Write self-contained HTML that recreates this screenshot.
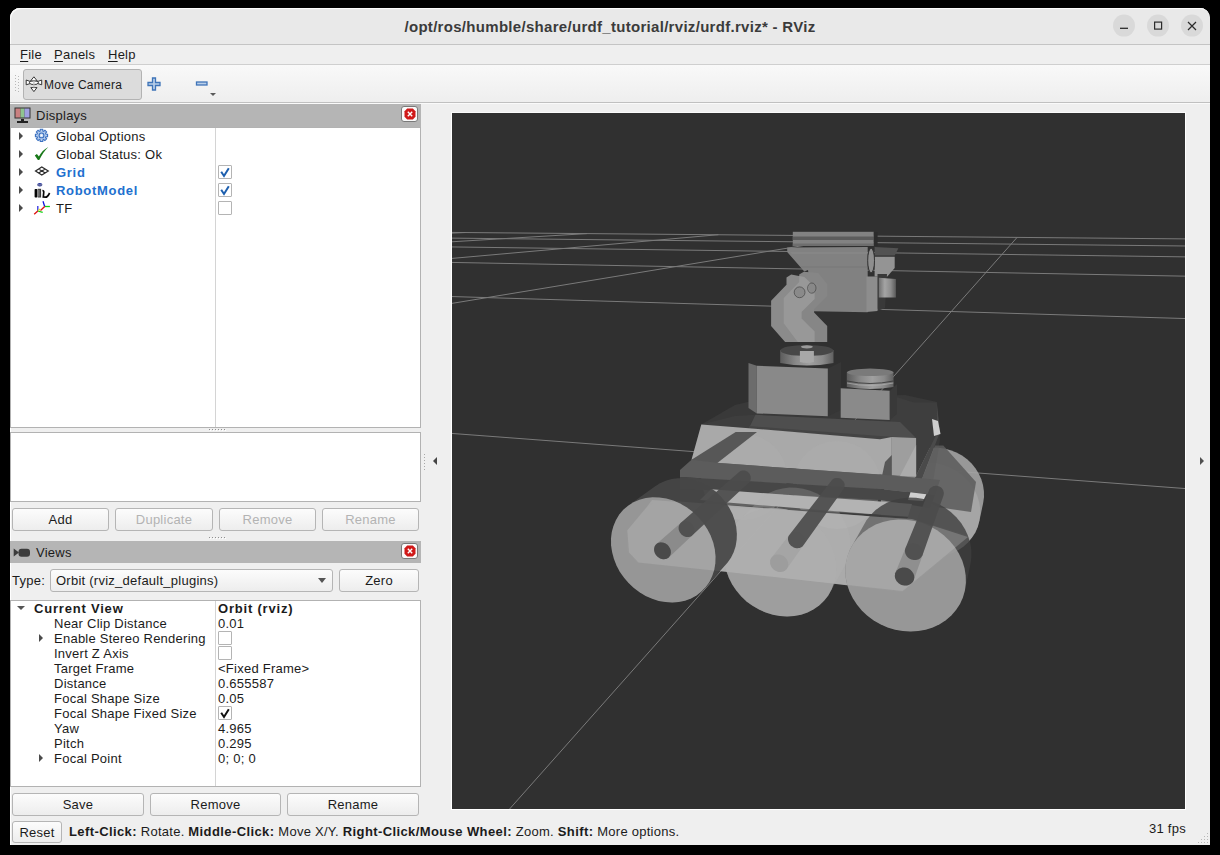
<!DOCTYPE html>
<html><head><meta charset="utf-8">
<style>
*{box-sizing:border-box;margin:0;padding:0}
html,body{width:1220px;height:855px;background:#000;overflow:hidden;font-family:"Liberation Sans",sans-serif;font-size:13px;color:#1b1b1b;position:relative;letter-spacing:0.25px}
.a{position:absolute}
.t{position:absolute;white-space:nowrap;line-height:16px}
b{letter-spacing:0.4px}
.u{text-decoration:underline;text-underline-offset:2px;text-decoration-thickness:1px}
.btn{position:absolute;border:1px solid #b5b5b5;border-radius:3px;background:linear-gradient(#fcfcfc,#ededed);text-align:center;line-height:21px;font-size:13px;color:#1b1b1b}
.dis{color:#b3b3b3}
.hdr{position:absolute;background:#b5b5b5}
.tree{position:absolute;background:#fff;border:1px solid #b2b2b2}
.ar{position:absolute;width:0;height:0;border-top:4px solid transparent;border-bottom:4px solid transparent;border-left:4px solid #4a4a4a}
.ad{position:absolute;width:0;height:0;border-left:4px solid transparent;border-right:4px solid transparent;border-top:4px solid #555}
.cb{position:absolute;width:14px;height:14px;border:1px solid #b4b4b4;background:#fff;border-radius:1px}
.blue{color:#2170cf;font-weight:bold;letter-spacing:0.7px}
.row{position:absolute;white-space:nowrap;line-height:18px;height:18px}
.vr{position:absolute;white-space:nowrap;line-height:15px;height:15px}
.close{position:absolute;width:17px;height:16px;border:1px solid #7a7a7a;border-radius:3px;background:#fafafa}
</style></head><body>
<div class="a" style="left:10px;top:8px;width:1200px;height:837px;background:#efefef;border-top-left-radius:10px;border-top-right-radius:10px;box-shadow:inset 1px 1px 0 #fff"></div>
<!-- title -->
<div class="a" style="left:10px;top:8px;width:1200px;height:37px;background:#e9e9e9;border-top-left-radius:10px;border-top-right-radius:10px;border-bottom:1px solid #c4c4c4;box-shadow:inset 1px 1px 0 #fbfbfb"></div>
<div class="t" style="left:10px;width:1200px;top:18px;text-align:center;font-weight:bold;font-size:15px;letter-spacing:0.3px;line-height:18px;color:#3b3b3b">/opt/ros/humble/share/urdf_tutorial/rviz/urdf.rviz* - RViz</div>
<svg class="a" style="left:0;top:0" width="1220" height="45">
 <circle cx="1124" cy="25.6" r="11" fill="#d9d9d9"/><circle cx="1158" cy="25.6" r="11" fill="#d9d9d9"/><circle cx="1192" cy="25.6" r="11" fill="#d9d9d9"/>
 <line x1="1120" y1="28.3" x2="1128" y2="28.3" stroke="#2b2b2b" stroke-width="1.3"/>
 <rect x="1154.6" y="22.1" width="7" height="7" fill="none" stroke="#2b2b2b" stroke-width="1.2"/>
 <path d="M1188 22 L1196 30 M1196 22 L1188 30" stroke="#2b2b2b" stroke-width="1.2"/>
</svg>
<!-- menubar -->
<div class="a" style="left:10px;top:45px;width:1200px;height:20px;background:#efefef;border-bottom:1px solid #cfcfcf"></div>
<div class="t" style="left:20px;top:47px"><span class="u">F</span>ile</div>
<div class="t" style="left:54px;top:47px"><span class="u">P</span>anels</div>
<div class="t" style="left:108px;top:47px"><span class="u">H</span>elp</div>
<!-- toolbar -->
<div class="a" style="left:10px;top:65px;width:1200px;height:38px;background:linear-gradient(#f9f9f9,#eeeeee);border-bottom:1px solid #c0c0c0;box-shadow:0 1px 0 #fafafa"></div>
<svg class="a" style="left:15px;top:75px" width="6" height="20"><g fill="#b8b8b8"><rect x="0" y="0" width="1" height="1"/><rect x="3" y="1" width="1" height="1"/><rect x="0" y="3" width="1" height="1"/><rect x="3" y="4" width="1" height="1"/><rect x="0" y="6" width="1" height="1"/><rect x="3" y="7" width="1" height="1"/><rect x="0" y="9" width="1" height="1"/><rect x="3" y="10" width="1" height="1"/><rect x="0" y="12" width="1" height="1"/><rect x="3" y="13" width="1" height="1"/><rect x="0" y="15" width="1" height="1"/><rect x="3" y="16" width="1" height="1"/></g></svg>
<div class="a" style="left:23px;top:69px;width:119px;height:31px;background:#dcdcdc;border:1px solid #b3b3b3;border-radius:3px"></div>
<svg class="a" style="left:24px;top:74px" width="20" height="20"><g fill="#fff" stroke="#222" stroke-width="0.9" stroke-linejoin="round"><path d="M2.2 6 L6 7.4 L6 9.6 L2.2 10.8 Z"/><path d="M17.7 6 L13.9 7.4 L13.9 9.6 L17.7 10.8 Z"/><ellipse cx="9.9" cy="8.6" rx="4.4" ry="2"/><path d="M9.9 2.8 L6.6 6.9 L13.2 6.9 Z"/><path d="M9.9 17.6 L6.8 13.6 L13 13.6 Z"/></g><rect x="9.3" y="7" width="1.3" height="6.6" fill="#bbb"/></svg>
<div class="t" style="left:44px;top:77px;font-size:12px">Move Camera</div>
<svg class="a" style="left:147px;top:77px" width="14" height="14"><path d="M5.5 1 H8.5 V5.5 H13 V8.5 H8.5 V13 H5.5 V8.5 H1 V5.5 H5.5 Z" fill="#b9cfe9" stroke="#3f74b8" stroke-width="1.3"/></svg>
<svg class="a" style="left:195px;top:81px" width="14" height="6"><rect x="1.5" y="1" width="10.5" height="3" fill="#b9cfe9" stroke="#3f74b8" stroke-width="1.3"/></svg>
<div class="ad" style="left:210px;top:93px;border-left-width:3px;border-right-width:3px;border-top-width:3px;border-top-color:#5a5a5a"></div>

<!-- Displays panel -->
<div class="hdr" style="left:10px;top:104px;width:411px;height:23px"></div>
<svg class="a" style="left:14px;top:107px" width="17" height="17">
 <rect x="0.5" y="0.5" width="16" height="11" fill="#333" />
 <rect x="1.5" y="1.5" width="5" height="9" fill="#c98080"/><rect x="6.5" y="1.5" width="4" height="9" fill="#8fc48f"/><rect x="10.5" y="1.5" width="5" height="9" fill="#a0a0e0"/>
 <rect x="7" y="12" width="3" height="2" fill="#222"/><rect x="3" y="14" width="11" height="2" fill="#222"/>
</svg>
<div class="t" style="left:36px;top:108px">Displays</div>
<div class="close" style="left:401px;top:106px"></div>
<svg class="a" style="left:404px;top:108px" width="12" height="12"><path d="M3.2 0.5 H8.8 L11.5 3.2 V8.8 L8.8 11.5 H3.2 L0.5 8.8 V3.2 Z" fill="#d01818"/><path d="M3.8 3.8 L8.2 8.2 M8.2 3.8 L3.8 8.2" stroke="#fff" stroke-width="1.4"/></svg>

<div class="tree" style="left:10px;top:127px;width:411px;height:301px"></div>
<div class="a" style="left:215px;top:128px;width:1px;height:299px;background:#d4d4d4"></div>
<div class="ar" style="left:19px;top:132px"></div>
<div class="ar" style="left:19px;top:150px"></div>
<div class="ar" style="left:19px;top:168px"></div>
<div class="ar" style="left:19px;top:186px"></div>
<div class="ar" style="left:19px;top:204px"></div>
<svg class="a" style="left:34px;top:128px" width="16" height="16"><g transform="translate(7.5,7.4)"><path d="M-1.55 -4.33 L-1.36 -4.39 L-1.23 -6.08 L1.23 -6.08 L1.36 -4.39 L1.97 -4.16 L2.15 -4.07 L3.43 -5.17 L5.17 -3.43 L4.07 -2.15 L4.33 -1.55 L4.39 -1.36 L6.08 -1.23 L6.08 1.23 L4.39 1.36 L4.16 1.97 L4.07 2.15 L5.17 3.43 L3.43 5.17 L2.15 4.07 L1.55 4.33 L1.36 4.39 L1.23 6.08 L-1.23 6.08 L-1.36 4.39 L-1.97 4.16 L-2.15 4.07 L-3.43 5.17 L-5.17 3.43 L-4.07 2.15 L-4.33 1.55 L-4.39 1.36 L-6.08 1.23 L-6.08 -1.23 L-4.39 -1.36 L-4.16 -1.97 L-4.07 -2.15 L-5.17 -3.43 L-3.43 -5.17 L-2.15 -4.07 Z" fill="#b3cbec" stroke="#3a70c0" stroke-width="1.1" stroke-linejoin="miter"/><circle r="2.4" fill="#c8daf2" stroke="#3a70c0" stroke-width="1.1"/><circle r="0.9" fill="#fff"/></g></svg>
<svg class="a" style="left:34px;top:146px" width="16" height="16"><path d="M0.8 9.6 L2.9 8.1 L4.9 10.6 C7 6.5 10 3.3 14.3 1 C10.8 4.3 7.8 8.6 5.3 14 L3.9 14 Z" fill="#187818"/></svg>
<svg class="a" style="left:34px;top:164px" width="16" height="14"><path d="M1.5 7 L7.8 3 L14.3 7 L7.8 11 Z M4.6 5 L11.2 9 M11.2 5 L4.6 9" fill="none" stroke="#2a2a2a" stroke-width="1.2"/></svg>
<svg class="a" style="left:34px;top:182px" width="17" height="17"><ellipse cx="5.8" cy="2.8" rx="2.6" ry="1.7" fill="#1a2a9a"/><rect x="3.4" y="2.6" width="4.8" height="0.7" fill="#d8d0a8"/><rect x="0.6" y="7" width="2.8" height="8.5" rx="0.8" fill="#050505"/><rect x="3.8" y="6.8" width="3.3" height="8.7" fill="#3a3a3a"/><rect x="4.4" y="7.6" width="1" height="7" fill="#a0a0a0"/><path d="M8.4 8.6 C9.6 8.6 10 9.4 9.7 10.6 L9.3 15 L11.6 15.2 C13 15.2 14.4 13.4 15.6 11" stroke="#080808" stroke-width="1.7" fill="none"/></svg>
<svg class="a" style="left:33px;top:200px" width="18" height="16"><g stroke-width="1.3" fill="none">
 <line x1="11.7" y1="6.5" x2="16.9" y2="6.5" stroke="#10d010"/><line x1="11.7" y1="6.5" x2="10" y2="1.2" stroke="#1010e0"/><line x1="11.7" y1="6.5" x2="7.5" y2="10.5" stroke="#e01010"/>
 <line x1="4.8" y1="11" x2="4.8" y2="6" stroke="#3030e0"/><line x1="4.8" y1="11" x2="9.7" y2="12.4" stroke="#10d010"/><line x1="4.8" y1="11" x2="1.2" y2="14.3" stroke="#e01010"/><line x1="5" y1="10.8" x2="7.3" y2="9" stroke="#e0e020"/></g></svg>
<div class="row" style="left:56px;top:128px">Global Options</div>
<div class="row" style="left:56px;top:146px">Global Status: Ok</div>
<div class="row blue" style="left:56px;top:164px">Grid</div>
<div class="row blue" style="left:56px;top:182px">RobotModel</div>
<div class="row" style="left:56px;top:200px">TF</div>
<div class="cb" style="left:218px;top:165px"></div>
<div class="cb" style="left:218px;top:183px"></div>
<div class="cb" style="left:218px;top:201px"></div>
<svg class="a" style="left:218px;top:165px" width="14" height="32"><path d="M3.2 6.8 L6 11 L10.8 3.2" stroke="#1d5fae" stroke-width="2" fill="none"/><path d="M3.2 24.8 L6 29 L10.8 21.2" stroke="#1d5fae" stroke-width="2" fill="none"/></svg>
<!-- splitter dots -->
<svg class="a" style="left:209px;top:429px" width="18" height="2"><g fill="#909090"><rect x="0" y="0" width="1" height="1"/><rect x="3" y="0" width="1" height="1"/><rect x="6" y="0" width="1" height="1"/><rect x="9" y="0" width="1" height="1"/><rect x="12" y="0" width="1" height="1"/><rect x="15" y="0" width="1" height="1"/></g><g fill="#fff"><rect x="1" y="1" width="1" height="1"/><rect x="4" y="1" width="1" height="1"/><rect x="7" y="1" width="1" height="1"/><rect x="10" y="1" width="1" height="1"/><rect x="13" y="1" width="1" height="1"/><rect x="16" y="1" width="1" height="1"/></g></svg>
<div class="tree" style="left:10px;top:432px;width:411px;height:70px"></div>
<div class="btn" style="left:12px;top:508px;width:97px;height:23px">Add</div>
<div class="btn dis" style="left:115px;top:508px;width:98px;height:23px">Duplicate</div>
<div class="btn dis" style="left:219px;top:508px;width:97px;height:23px">Remove</div>
<div class="btn dis" style="left:322px;top:508px;width:97px;height:23px">Rename</div>
<svg class="a" style="left:209px;top:537px" width="18" height="2"><g fill="#909090"><rect x="0" y="0" width="1" height="1"/><rect x="3" y="0" width="1" height="1"/><rect x="6" y="0" width="1" height="1"/><rect x="9" y="0" width="1" height="1"/><rect x="12" y="0" width="1" height="1"/><rect x="15" y="0" width="1" height="1"/></g><g fill="#fff"><rect x="1" y="1" width="1" height="1"/><rect x="4" y="1" width="1" height="1"/><rect x="7" y="1" width="1" height="1"/><rect x="10" y="1" width="1" height="1"/><rect x="13" y="1" width="1" height="1"/><rect x="16" y="1" width="1" height="1"/></g></svg>
<!-- Views -->
<div class="hdr" style="left:10px;top:541px;width:411px;height:22px"></div>
<svg class="a" style="left:13px;top:548px" width="18" height="10"><path d="M0.7 0.5 L6 4.5 L0.7 8.5 Z" fill="#3c3c3c"/><rect x="5.5" y="0.8" width="11.5" height="8" rx="3" fill="#3c3c3c"/></svg>
<div class="t" style="left:36px;top:545px">Views</div>
<div class="close" style="left:401px;top:543px"></div>
<svg class="a" style="left:404px;top:545px" width="12" height="12"><path d="M3.2 0.5 H8.8 L11.5 3.2 V8.8 L8.8 11.5 H3.2 L0.5 8.8 V3.2 Z" fill="#d01818"/><path d="M3.8 3.8 L8.2 8.2 M8.2 3.8 L3.8 8.2" stroke="#fff" stroke-width="1.4"/></svg>
<div class="t" style="left:12px;top:573px">Type:</div>
<div class="btn" style="left:50px;top:569px;width:283px;height:23px;text-align:left;padding-left:5px">Orbit (rviz_default_plugins)</div>
<div class="ad" style="left:318px;top:578px;border-top-width:5px;border-left-width:4px;border-right-width:4px"></div>
<div class="btn" style="left:339px;top:569px;width:80px;height:23px">Zero</div>
<div class="tree" style="left:10px;top:600px;width:411px;height:187px"></div>
<div class="a" style="left:215px;top:601px;width:1px;height:185px;background:#d4d4d4"></div>
<div class="ad" style="left:17px;top:606px"></div>
<div class="ar" style="left:39px;top:634px"></div>
<div class="ar" style="left:39px;top:754px"></div>
<div class="vr" style="left:34px;top:601px;font-weight:bold;letter-spacing:0.8px">Current View</div>
<div class="vr" style="left:218px;top:601px;font-weight:bold;letter-spacing:0.8px">Orbit (rviz)</div>
<div class="vr" style="left:54px;top:616px">Near Clip Distance</div>
<div class="vr" style="left:54px;top:631px">Enable Stereo Rendering</div>
<div class="vr" style="left:54px;top:646px">Invert Z Axis</div>
<div class="vr" style="left:54px;top:661px">Target Frame</div>
<div class="vr" style="left:54px;top:676px">Distance</div>
<div class="vr" style="left:54px;top:691px">Focal Shape Size</div>
<div class="vr" style="left:54px;top:706px">Focal Shape Fixed Size</div>
<div class="vr" style="left:54px;top:721px">Yaw</div>
<div class="vr" style="left:54px;top:736px">Pitch</div>
<div class="vr" style="left:54px;top:751px">Focal Point</div>
<div class="vr" style="left:218px;top:616px">0.01</div>
<div class="cb" style="left:218px;top:631px"></div>
<div class="cb" style="left:218px;top:646px"></div>
<div class="vr" style="left:218px;top:661px">&lt;Fixed Frame&gt;</div>
<div class="vr" style="left:218px;top:676px">0.655587</div>
<div class="vr" style="left:218px;top:691px">0.05</div>
<div class="cb" style="left:218px;top:706px"></div>
<svg class="a" style="left:218px;top:706px" width="14" height="14"><path d="M3.2 6.8 L6 11 L10.8 3.2" stroke="#111" stroke-width="2" fill="none"/></svg>
<div class="vr" style="left:218px;top:721px">4.965</div>
<div class="vr" style="left:218px;top:736px">0.295</div>
<div class="vr" style="left:218px;top:751px">0; 0; 0</div>
<div class="btn" style="left:12px;top:793px;width:132px;height:23px">Save</div>
<div class="btn" style="left:150px;top:793px;width:131px;height:23px">Remove</div>
<div class="btn" style="left:287px;top:793px;width:132px;height:23px">Rename</div>
<!-- status -->
<div class="btn" style="left:12px;top:821px;width:50px;height:22px;line-height:22px">Reset</div>
<div class="t" style="left:69px;top:824px"><b>Left-Click:</b> Rotate. <b>Middle-Click:</b> Move X/Y. <b>Right-Click/Mouse Wheel:</b> Zoom. <b>Shift:</b> More options.</div>
<div class="t" style="left:1149px;top:821px">31 fps</div>
<svg class="a" style="left:1198px;top:832px" width="12" height="12"><g fill="#b8b8b8"><rect x="9" y="1" width="1" height="1"/><rect x="6" y="4" width="1" height="1"/><rect x="9" y="4" width="1" height="1"/><rect x="3" y="7" width="1" height="1"/><rect x="6" y="7" width="1" height="1"/><rect x="9" y="7" width="1" height="1"/><rect x="0" y="10" width="1" height="1"/><rect x="3" y="10" width="1" height="1"/><rect x="6" y="10" width="1" height="1"/><rect x="9" y="10" width="1" height="1"/></g></svg>
<!-- side arrows --><svg class="a" style="left:424px;top:454px" width="2" height="17"><g fill="#a8a8a8"><rect x="0" y="0" width="1" height="1"/><rect x="0" y="3" width="1" height="1"/><rect x="0" y="6" width="1" height="1"/><rect x="0" y="9" width="1" height="1"/><rect x="0" y="12" width="1" height="1"/><rect x="0" y="15" width="1" height="1"/></g></svg>
<div class="a" style="left:433px;top:457px;width:0;height:0;border-top:4px solid transparent;border-bottom:4px solid transparent;border-right:4px solid #444"></div>
<div class="a" style="left:1200px;top:457px;width:0;height:0;border-top:4px solid transparent;border-bottom:4px solid transparent;border-left:4px solid #505050"></div>
<!-- viewport -->
<div class="a" style="left:451px;top:112px;width:735px;height:698px;border:1px solid #fff;border-top-color:#fafafa"></div>
<div class="a" style="left:452px;top:113px;width:733px;height:696px;background:#303030;overflow:hidden">
<svg width="733" height="696" viewBox="452 113 733 696" style="position:absolute;left:0;top:0"><g stroke="#7a7a7a" stroke-width="1" fill="none"><line x1="450.0" y1="233.2" x2="465.5" y2="232.5"/><line x1="450.0" y1="241.9" x2="586.9" y2="233.6"/><line x1="450.0" y1="258.6" x2="718.4" y2="234.7"/><line x1="450.0" y1="303.7" x2="861.3" y2="236.0"/><line x1="507.8" y1="811.0" x2="1017.1" y2="237.4"/><line x1="450.0" y1="433.3" x2="1187.0" y2="488.7"/><line x1="450.0" y1="296.5" x2="1187.0" y2="318.6"/><line x1="450.0" y1="262.4" x2="1187.0" y2="276.2"/><line x1="450.0" y1="246.9" x2="1187.0" y2="256.9"/><line x1="450.0" y1="238.1" x2="1187.0" y2="246.0"/><line x1="450.0" y1="232.4" x2="1187.0" y2="238.9"/></g><polygon points="880.5,506.0 881.0,500.0 882.4,494.1 884.6,488.5 887.6,483.2 896.5,467.5 900.0,462.9 904.2,458.7 908.9,455.2 914.2,452.2 919.8,450.0 925.8,448.5 931.9,447.7 938.2,447.7 944.4,448.6 950.5,450.2 956.4,452.5 962.0,455.6 967.1,459.3 971.6,463.6 975.6,468.4 978.8,473.7 981.3,479.2 983.0,485.0 983.9,490.9 984.0,496.9 983.2,502.7 979.4,520.8 977.8,526.7 975.3,532.4 972.0,537.6 968.1,542.3 963.5,546.4 958.3,549.9 952.7,552.7 946.8,554.8 940.6,556.1 934.2,556.6 927.8,556.3 921.4,555.3 915.2,553.5 909.2,551.1 903.6,547.9 898.5,544.1 893.8,539.7 889.8,534.8 886.4,529.6 883.8,524.0 881.9,518.1 880.8,512.1" fill="#a4a4a4" fill-opacity="0.9"/><polygon points="980.2,514.7 980.2,508.4 979.2,502.2 977.4,496.1 974.7,490.2 971.3,484.6 967.1,479.5 962.3,475.0 956.8,471.0 951.0,467.7 944.7,465.2 938.2,463.5 931.6,462.6 925.0,462.5 918.5,463.3 912.2,464.9 906.2,467.2 900.7,470.3 895.7,474.0 891.3,478.4 887.6,483.2 884.6,488.5 882.4,494.1 881.0,500.0 880.5,506.0 880.8,512.1 881.9,518.1 883.8,524.0 886.4,529.6 889.8,534.8 893.8,539.7 898.5,544.1 903.6,547.9 909.2,551.1 915.2,553.5 921.4,555.3 927.8,556.3 934.2,556.6 940.6,556.1 946.8,554.8 952.7,552.7 958.3,549.9 963.5,546.4 968.1,542.3 972.0,537.6 975.3,532.4 977.8,526.7 979.4,520.8" fill="#b2b2b2" fill-opacity="0.5" /><!-- translucent dark top plate over bg -->
<path d="M691.5 460 L701.3 424.6 L735 405 L756 400 L905 395 L937 402 L940 440 L930 500 L900 560 L680 560 L680 477 Z" fill="#4a4a4a" fill-opacity="0.35"/>
<!-- far right wheel dark end face -->
<path d="M935 445.5 L943.3 445.5 L976 482 L971 512 L938.6 507.3 L915 497 Z" fill="#5a5a5a" fill-opacity="0.85"/>
<!-- tall dark block right -->
<path d="M890 395 L914 402.5 L936.7 402.5 L937 433 L916 476 L891.8 476 Z" fill="#3e3e3e"/>
<path d="M936.7 402.5 L940 432 L915 497 L905 497 L916 476 L937 433 Z" fill="#4a4a4a"/>
<path d="M932 419 L938 421 L940.5 434 L934 436 Z" fill="#cfcfcf"/>
<!-- dark rim band -->
<path d="M701.3 424.6 L748.9 428.2 L755.4 414.8 L735 416 Z" fill="#3e3e3e"/><path d="M755.4 414.8 L900 422 L916 438 L880 439.3 L748.9 428.2 Z" fill="#4e4e4e"/>
<path d="M748.9 426 L880 436 L916 438 L880 439.3 L748.9 427.9 Z" fill="#444"/>
<!-- upper light plate -->
<path d="M701.3 424.6 L748.9 428.2 L880 439.3 L891.8 437.1 L891.8 475.5 L880 474.6 L719.3 463.1 L691.5 459.8 Z" fill="#a9a9a9"/>
<ellipse cx="744" cy="477" rx="43" ry="43" fill="#b0b0b0" fill-opacity="0.35"/>
<ellipse cx="837" cy="485" rx="44" ry="44" fill="#b0b0b0" fill-opacity="0.35"/>
<!-- right small box face -->
<path d="M891.8 437.1 L916.1 438 L916.1 476.4 L891.8 475.5 Z" fill="#9e9e9e"/>
<path d="M903 470 L916.1 445 L916.1 476.4 L900 476 Z" fill="#acacac"/>
<path d="M885 462 L891.8 455 L891.8 475.5 L887 485 L882 476 Z" fill="#575757"/>
<!-- diagonal dark bar -->
<path d="M691.5 459.8 L735.7 432 L757 432 L701.3 475.4 Z" fill="#575757"/>
<!-- middle band medium -->
<path d="M719.3 463.1 L891.8 475.5 L940 480 L935 495 L880 489 L680 477 L680 470 L691.5 459.8 Z" fill="#5c5c5c"/>
<path d="M680 477 L880 489 L935 495 L930 508 L880 500 L680 488.5 Z" fill="#474747"/>
<!-- lower light strip -->
<path d="M711 489.3 L880 501.6 L912 504 L908 516.5 L880 514.8 L727.5 502.5 L700 500 Z" fill="#b3b3b3"/>
<path d="M650 500 L880 515 L908 517 L907 519 L880 517 L650 502 Z" fill="#3c3c3c"/>
<path d="M910.5 492.3 L926.4 494.2 L923 501 L908 500 Z" fill="#d0d0d0"/>
<!-- lower chassis near face -->
<path d="M627.5 531.7 L643.4 510.2 L660 500 L880 517 L912 519 L970 536 L902.3 591.8 L780 577.5 L637.8 562.6 L627.5 550.4 Z" fill="#b4b4b4" fill-opacity="0.85"/>
<defs>
<linearGradient id="cylg" x1="0" x2="1" y1="0" y2="0"><stop offset="0" stop-color="#5c5c5c"/><stop offset="0.3" stop-color="#8a8a8a"/><stop offset="0.55" stop-color="#a0a0a0"/><stop offset="0.8" stop-color="#8a8a8a"/><stop offset="1" stop-color="#606060"/></linearGradient>
<linearGradient id="lensg" x1="0" x2="1" y1="0" y2="0"><stop offset="0" stop-color="#707070"/><stop offset="0.35" stop-color="#a4a4a4"/><stop offset="0.7" stop-color="#8c8c8c"/><stop offset="1" stop-color="#5a5a5a"/></linearGradient>
</defs>
<!-- left box -->
<path d="M748.5 363 L756.8 365.7 L756.8 413.4 L748.5 408 Z" fill="#6c6c6c"/>
<path d="M756.8 365.7 L827.9 368.5 L827.9 416.2 L756.8 413.4 Z" fill="#898989"/>
<path d="M827.9 368.5 L841 362 L841 410 L827.9 416.2 Z" fill="#363636"/>
<!-- right box -->
<path d="M840.7 388.2 L889.8 390.7 L889.8 420.1 L840.7 417.7 Z" fill="#8a8a8a"/>
<path d="M889.8 390.7 L897 384 L897 414 L889.8 420.1 Z" fill="#393939"/>
<path d="M846.8 372.3 L893.5 372.3 L893.5 387 Q870 391 846.8 387 Z" fill="url(#cylg)"/>
<ellipse cx="870.2" cy="372.3" rx="23.3" ry="3.7" fill="#7a7a7a"/>
<path d="M847 381 Q870 386 893.4 381" stroke="#3c3c3c" stroke-width="0.9" fill="none"/>
<path d="M847 383 Q870 388 893.4 383" stroke="#b0b0b0" stroke-width="0.7" fill="none"/>
<!-- turntable -->
<path d="M780.2 350 L833.5 350 L833.5 363 Q806.8 368 780.2 363 Z" fill="url(#cylg)"/>
<ellipse cx="806.8" cy="350.5" rx="26.6" ry="5.5" fill="#474747"/>
<path d="M799.9 351 L813.9 351 L813.9 362 Q806.9 364 799.9 362 Z" fill="#a8a8a8"/>
<ellipse cx="806.9" cy="346.8" rx="6" ry="1.6" fill="#9a9a9a"/>
<!-- head -->
<path d="M787.2 247.5 L867.7 247 L867.7 312.2 L813.7 311.3 L808 270 L804.3 271.6 L787.2 252 Z" fill="#818181"/>
<path d="M790 252 L867.7 252 L867.7 254 L792 254 Z" fill="#8a8a8a" fill-opacity="0.6"/>
<path d="M800 266 L867.7 266 L867.7 268 L802 268 Z" fill="#777" fill-opacity="0.5"/>
<rect x="792.8" y="231.8" width="81" height="14.2" fill="#828282"/>
<rect x="792.8" y="236.5" width="81" height="3.5" fill="#5c5c5c"/>
<rect x="792.8" y="243.5" width="81" height="2.5" fill="#6e6e6e"/>
<rect x="873.8" y="232" width="3.8" height="14" fill="#2c2c2c"/>
<path d="M874.6 247 L898.4 248.2 L894.7 255.6 L874.6 255.6 Z" fill="#525252"/>
<path d="M874.6 256.8 L894.7 256.8 L894.7 267.9 L887.3 276.5 L874.6 276.5 Z" fill="#949494"/>
<path d="M877.5 274 L887 274 L885 308 L877.5 310.9 Z" fill="#393939"/>
<path d="M866.5 276.5 L877.5 276.5 L877.5 310.9 L866.5 312.1 Z" fill="#8d8d8d"/>
<path d="M878.8 277.7 L895.9 279 L895.9 297.4 L878.8 297.4 Z" fill="url(#lensg)"/>
<ellipse cx="871.1" cy="260.5" rx="3.4" ry="12.3" fill="#8e8e8e" stroke="#2e2e2e" stroke-width="0.9"/>
<!-- arm bracket -->
<defs><clipPath id="plB"><path d="M783.7 298 L799.2 282 L799.2 274.6 L803.8 271.7 L818.3 273.1 L827.2 283.9 L827.2 296.1 L814.1 309.2 L814.1 312.5 L827.2 326 L827.2 341.9 L797.8 341.9 L783.7 323.2 Z"/></clipPath></defs>
<path d="M783.7 298 L799.2 282 L799.2 274.6 L803.8 271.7 L818.3 273.1 L827.2 283.9 L827.2 296.1 L814.1 309.2 L814.1 312.5 L827.2 326 L827.2 341.9 L797.8 341.9 L783.7 323.2 Z" fill="#868686"/>
<path d="M771.1 300.8 L786.5 284.8 L786.5 277.4 L791.2 274.6 L804.3 276.9 L814.6 286.7 L814.6 298.9 L801.5 312 L801.5 318.5 L814.6 331.6 L814.6 341.9 L785.1 341.9 L771.1 326 Z" fill="#8b8b8b"/>
<path d="M771.1 300.8 L786.5 284.8 L786.5 277.4 L791.2 274.6 L804.3 276.9 L814.6 286.7 L814.6 298.9 L801.5 312 L801.5 318.5 L814.6 331.6 L814.6 341.9 L785.1 341.9 L771.1 326 Z" fill="#989898" clip-path="url(#plB)"/>
<circle cx="813.7" cy="287.7" r="5.2" fill="#888"/>
<circle cx="799.6" cy="292.3" r="5.4" fill="#8a8a8a" stroke="#444" stroke-width="0.7"/>
<ellipse cx="811.8" cy="288.1" rx="4.2" ry="5.1" fill="none" stroke="#444" stroke-width="0.7"/>
<polygon points="845.3,570.2 845.9,563.1 847.4,556.2 850.0,549.5 853.5,543.3 866.5,520.3 870.7,514.9 875.6,510.1 881.2,506.0 887.4,502.6 894.1,500.1 901.2,498.4 908.6,497.6 916.1,497.8 923.6,498.9 930.9,500.9 938.0,503.8 944.7,507.5 950.8,512.0 956.3,517.2 961.1,523.0 965.0,529.3 968.1,535.9 970.2,542.8 971.3,549.8 971.4,556.8 970.5,563.7 964.9,590.4 962.9,597.4 960.0,604.0 956.0,610.1 951.3,615.5 945.8,620.3 939.6,624.3 932.8,627.5 925.6,629.7 918.2,631.1 910.5,631.5 902.8,631.1 895.1,629.7 887.6,627.4 880.4,624.3 873.7,620.4 867.4,615.7 861.8,610.4 856.9,604.6 852.8,598.3 849.5,591.6 847.1,584.6 845.7,577.4" fill="#3e3e3e" fill-opacity="0.8"/><polygon points="965.9,583.1 965.7,575.6 964.5,568.1 962.3,560.8 959.0,553.7 954.8,547.0 949.6,540.7 943.7,535.2 937.1,530.3 929.9,526.3 922.3,523.1 914.4,520.9 906.4,519.7 898.3,519.5 890.5,520.2 882.9,522.0 875.7,524.6 869.1,528.2 863.1,532.5 857.9,537.6 853.5,543.3 850.0,549.5 847.4,556.2 845.9,563.1 845.3,570.2 845.7,577.4 847.1,584.6 849.5,591.6 852.8,598.3 856.9,604.6 861.8,610.4 867.4,615.7 873.7,620.4 880.4,624.3 887.6,627.4 895.1,629.7 902.8,631.1 910.5,631.5 918.2,631.1 925.6,629.7 932.8,627.5 939.6,624.3 945.8,620.3 951.3,615.5 956.0,610.1 960.0,604.0 962.9,597.4 964.9,590.4" fill="#a2a2a2" fill-opacity="0.9" /><polygon points="724.1,557.4 724.3,550.4 725.4,543.7 727.5,537.3 730.5,531.2 734.3,525.7 738.9,520.8 759.2,499.9 764.2,495.9 769.9,492.6 776.0,490.1 782.5,488.4 789.4,487.6 796.3,487.8 803.3,488.8 810.3,490.7 817.0,493.5 823.3,497.1 829.2,501.5 834.6,506.5 839.2,512.1 843.1,518.2 846.2,524.6 848.5,531.3 849.8,538.1 850.2,544.8 849.6,551.5 848.2,557.9 845.8,564.0 831.6,589.6 828.3,595.5 824.1,600.8 819.2,605.4 813.7,609.3 807.6,612.4 801.1,614.7 794.2,616.0 787.1,616.5 779.9,616.1 772.8,614.8 765.7,612.6 759.0,609.6 752.5,605.8 746.5,601.4 741.1,596.3 736.3,590.6 732.2,584.5 728.9,578.0 726.4,571.2 724.8,564.3" fill="#b0b0b0" fill-opacity="0.25"/><polygon points="836.1,569.3 835.7,562.1 834.2,554.8 831.8,547.7 828.5,540.9 824.3,534.4 819.2,528.4 813.5,523.0 807.2,518.3 800.4,514.4 793.2,511.4 785.8,509.3 778.3,508.2 770.9,508.0 763.7,508.8 756.7,510.5 750.2,513.1 744.2,516.5 738.9,520.8 734.3,525.7 730.5,531.2 727.5,537.3 725.4,543.7 724.3,550.4 724.1,557.4 724.8,564.3 726.4,571.2 728.9,578.0 732.2,584.5 736.3,590.6 741.1,596.3 746.5,601.4 752.5,605.8 759.0,609.6 765.7,612.6 772.8,614.8 779.9,616.1 787.1,616.5 794.2,616.0 801.1,614.7 807.6,612.4 813.7,609.3 819.2,605.4 824.1,600.8 828.3,595.5 831.6,589.6 834.1,583.1 835.6,576.3" fill="#a6a6a6" fill-opacity="0.9" /><polygon points="611.0,538.6 611.8,532.1 613.5,525.9 616.0,520.0 619.3,514.6 623.3,509.8 628.1,505.7 654.9,486.4 660.1,483.2 665.7,480.7 671.7,479.1 678.0,478.3 684.5,478.4 691.1,479.4 697.6,481.3 704.0,484.0 710.0,487.4 715.7,491.6 720.9,496.5 725.4,501.9 729.3,507.8 732.5,514.0 734.8,520.5 736.3,527.1 736.9,533.7 736.7,540.1 735.6,546.4 733.7,552.3 731.0,557.7 727.5,562.7 705.8,587.1 701.4,591.6 696.5,595.4 691.0,598.4 685.0,600.7 678.7,602.0 672.2,602.5 665.5,602.1 658.8,600.9 652.2,598.8 645.7,595.9 639.6,592.3 633.9,588.0 628.6,583.0 623.9,577.6 619.8,571.7 616.5,565.4 613.9,558.8 612.1,552.1 611.1,545.3" fill="#474747" fill-opacity="0.92"/><polygon points="715.5,556.4 714.8,549.5 713.2,542.5 710.6,535.6 707.2,528.9 703.0,522.7 698.1,516.9 692.6,511.7 686.5,507.2 680.1,503.5 673.3,500.6 666.4,498.6 659.4,497.5 652.5,497.3 645.8,498.1 639.4,499.8 633.5,502.3 628.1,505.7 623.3,509.8 619.3,514.6 616.0,520.0 613.5,525.9 611.8,532.1 611.0,538.6 611.1,545.3 612.1,552.1 613.9,558.8 616.5,565.4 619.8,571.7 623.9,577.6 628.6,583.0 633.9,588.0 639.6,592.3 645.7,595.9 652.2,598.8 658.8,600.9 665.5,602.1 672.2,602.5 678.7,602.0 685.0,600.7 691.0,598.4 696.5,595.4 701.4,591.6 705.8,587.1 709.4,581.9 712.2,576.1 714.2,569.9 715.3,563.3" fill="#a0a0a0" fill-opacity="0.9" /><defs><clipPath id="lwf"><polygon points="715.5,556.4 714.8,549.5 713.2,542.5 710.6,535.6 707.2,528.9 703.0,522.7 698.1,516.9 692.6,511.7 686.5,507.2 680.1,503.5 673.3,500.6 666.4,498.6 659.4,497.5 652.5,497.3 645.8,498.1 639.4,499.8 633.5,502.3 628.1,505.7 623.3,509.8 619.3,514.6 616.0,520.0 613.5,525.9 611.8,532.1 611.0,538.6 611.1,545.3 612.1,552.1 613.9,558.8 616.5,565.4 619.8,571.7 623.9,577.6 628.6,583.0 633.9,588.0 639.6,592.3 645.7,595.9 652.2,598.8 658.8,600.9 665.5,602.1 672.2,602.5 678.7,602.0 685.0,600.7 691.0,598.4 696.5,595.4 701.4,591.6 705.8,587.1 709.4,581.9 712.2,576.1 714.2,569.9 715.3,563.3"/></clipPath><clipPath id="nolw"><path d="M452 113 H1185 V809 H452 Z M611.0,538.6 L611.8,532.1 L613.5,525.9 L616.0,520.0 L619.3,514.6 L623.3,509.8 L628.1,505.7 L654.9,486.4 L660.1,483.2 L665.7,480.7 L671.7,479.1 L678.0,478.3 L684.5,478.4 L691.1,479.4 L697.6,481.3 L704.0,484.0 L710.0,487.4 L715.7,491.6 L720.9,496.5 L725.4,501.9 L729.3,507.8 L732.5,514.0 L734.8,520.5 L736.3,527.1 L736.9,533.7 L736.7,540.1 L735.6,546.4 L733.7,552.3 L731.0,557.7 L727.5,562.7 L705.8,587.1 L701.4,591.6 L696.5,595.4 L691.0,598.4 L685.0,600.7 L678.7,602.0 L672.2,602.5 L665.5,602.1 L658.8,600.9 L652.2,598.8 L645.7,595.9 L639.6,592.3 L633.9,588.0 L628.6,583.0 L623.9,577.6 L619.8,571.7 L616.5,565.4 L613.9,558.8 L612.1,552.1 L611.1,545.3 Z" clip-rule="evenodd"/></clipPath></defs><path d="M627.3 530.3 L646 508 L652 500 L880 517 L912 519 L968 537 L902.7 591 L638.4 562.5 L629 552.5 Z" fill="#c4c4c4" fill-opacity="0.28" clip-path="url(#nolw)"/><path d="M627.3 530.3 L646 508 L652 500 L880 517 L912 519 L968 537 L902.7 591 L638.4 562.5 L629 552.5 Z" fill="#c4c4c4" fill-opacity="0.28" clip-path="url(#lwf)"/><polygon points="654.1,549.9 654.1,548.8 654.3,547.8 654.5,546.8 655.0,545.8 655.5,545.0 656.2,544.2 680.6,522.9 681.4,522.3 682.2,521.8 683.1,521.5 684.1,521.2 685.1,521.1 686.1,521.2 687.2,521.3 688.2,521.6 689.2,522.1 690.2,522.6 691.1,523.3 691.9,524.0 692.6,524.9 693.2,525.8 693.7,526.8 694.1,527.8 694.4,528.9 694.5,529.9 694.5,530.9 694.3,531.9 694.0,532.9 693.6,533.8 693.1,534.6 692.4,535.3 668.8,557.4 668.0,558.0 667.1,558.5 666.1,558.9 665.1,559.1 664.1,559.2 663.0,559.2 661.9,559.0 660.8,558.7 659.7,558.2 658.7,557.6 657.8,556.9 656.9,556.1 656.1,555.2 655.5,554.2 654.9,553.2 654.5,552.1 654.2,551.0" fill="#858585" fill-opacity="0.8"/><polygon points="670.9,551.7 670.8,550.6 670.5,549.5 670.1,548.4 669.5,547.4 668.9,546.4 668.1,545.5 667.2,544.6 666.3,543.9 665.3,543.3 664.2,542.9 663.1,542.5 662.0,542.4 660.9,542.3 659.8,542.4 658.8,542.7 657.9,543.1 657.0,543.6 656.2,544.2 655.5,545.0 655.0,545.8 654.5,546.8 654.3,547.8 654.1,548.8 654.1,549.9 654.2,551.0 654.5,552.1 654.9,553.2 655.5,554.2 656.1,555.2 656.9,556.1 657.8,556.9 658.7,557.6 659.7,558.2 660.8,558.7 661.9,559.0 663.0,559.2 664.1,559.2 665.1,559.1 666.1,558.9 667.1,558.5 668.0,558.0 668.8,557.4 669.4,556.6 670.0,555.8 670.4,554.9 670.7,553.9 670.9,552.8" fill="#4a4a4a"/><polygon points="770.2,562.3 770.2,561.1 770.4,560.0 770.8,559.0 771.3,558.0 771.9,557.2 789.7,534.4 790.4,533.6 791.2,533.0 792.1,532.5 793.1,532.1 794.2,531.9 795.3,531.7 796.4,531.8 797.5,532.0 798.6,532.3 799.6,532.7 800.6,533.3 801.6,534.0 802.4,534.8 803.1,535.7 803.8,536.6 804.3,537.6 804.6,538.7 804.8,539.8 804.9,540.8 804.9,541.9 804.6,542.9 804.3,543.9 803.8,544.8 787.0,568.4 786.4,569.3 785.6,570.0 784.7,570.7 783.8,571.2 782.7,571.6 781.6,571.8 780.5,571.9 779.3,571.9 778.1,571.7 777.0,571.3 775.8,570.8 774.8,570.2 773.8,569.5 772.9,568.6 772.1,567.7 771.4,566.7 770.9,565.6 770.5,564.5 770.3,563.4" fill="#a2a2a2" fill-opacity="0.8"/><polygon points="788.2,564.2 788.1,563.0 787.9,561.9 787.5,560.8 786.9,559.7 786.3,558.7 785.5,557.7 784.6,556.9 783.6,556.1 782.5,555.5 781.4,555.0 780.2,554.7 779.0,554.5 777.8,554.5 776.7,554.6 775.6,554.8 774.5,555.2 773.6,555.7 772.7,556.4 771.9,557.2 771.3,558.0 770.8,559.0 770.4,560.0 770.2,561.1 770.2,562.3 770.3,563.4 770.5,564.5 770.9,565.6 771.4,566.7 772.1,567.7 772.9,568.6 773.8,569.5 774.8,570.2 775.8,570.8 777.0,571.3 778.1,571.7 779.3,571.9 780.5,571.9 781.6,571.8 782.7,571.6 783.8,571.2 784.7,570.7 785.6,570.0 786.4,569.3 787.0,568.4 787.5,567.4 787.9,566.4 788.1,565.3" fill="#9d9d9d"/><polygon points="894.9,575.5 895.0,574.4 895.2,573.2 905.3,548.6 905.7,547.6 906.3,546.6 907.0,545.8 907.8,545.0 908.7,544.4 909.7,543.9 910.8,543.5 911.9,543.2 913.1,543.1 914.3,543.2 915.5,543.4 916.6,543.7 917.7,544.1 918.8,544.7 919.8,545.5 920.6,546.3 921.4,547.2 922.0,548.2 922.5,549.2 922.8,550.3 923.0,551.4 923.1,552.5 923.0,553.6 922.7,554.7 913.8,579.9 913.4,580.9 912.8,581.9 912.0,582.8 911.2,583.6 910.2,584.3 909.1,584.8 908.0,585.2 906.8,585.4 905.5,585.5 904.2,585.5 903.0,585.3 901.7,584.9 900.6,584.4 899.4,583.8 898.4,583.0 897.5,582.1 896.7,581.2 896.0,580.1 895.5,579.0 895.1,577.9 894.9,576.7" fill="#8a8a8a" fill-opacity="0.8"/><polygon points="914.3,577.6 914.2,576.4 914.0,575.2 913.6,574.1 913.1,572.9 912.4,571.9 911.6,570.9 910.7,570.0 909.7,569.3 908.5,568.6 907.3,568.1 906.1,567.8 904.8,567.6 903.5,567.5 902.3,567.6 901.1,567.9 899.9,568.3 898.8,568.8 897.9,569.5 897.0,570.3 896.3,571.2 895.7,572.2 895.2,573.2 895.0,574.4 894.9,575.5 894.9,576.7 895.1,577.9 895.5,579.0 896.0,580.1 896.7,581.2 897.5,582.1 898.4,583.0 899.4,583.8 900.6,584.4 901.7,584.9 903.0,585.3 904.2,585.5 905.5,585.5 906.8,585.4 908.0,585.2 909.1,584.8 910.2,584.3 911.2,583.6 912.0,582.8 912.8,581.9 913.4,580.9 913.8,579.9 914.1,578.7" fill="#4a4a4a"/><polygon points="678.6,528.3 678.6,527.3 678.8,526.3 679.1,525.4 679.5,524.5 680.0,523.7 680.6,522.9 739.1,472.1 739.8,471.5 740.5,471.1 741.3,470.8 742.1,470.5 743.0,470.4 743.8,470.4 744.7,470.6 745.6,470.8 746.5,471.2 747.3,471.6 748.0,472.2 748.7,472.8 749.3,473.6 749.8,474.3 750.2,475.2 750.5,476.0 750.7,476.9 750.8,477.8 750.8,478.7 750.6,479.6 750.4,480.4 750.0,481.2 749.5,481.9 748.9,482.5 692.4,535.3 691.7,535.9 690.8,536.4 689.9,536.8 688.9,537.0 687.9,537.1 686.9,537.1 685.9,536.9 684.9,536.6 683.9,536.2 682.9,535.6 682.0,534.9 681.2,534.2 680.5,533.3 679.9,532.4 679.4,531.4 679.0,530.4 678.7,529.4" fill="#4c4c4c" fill-opacity="0.92"/><polygon points="788.0,539.2 788.0,538.1 788.2,537.1 788.6,536.1 789.1,535.2 789.7,534.4 831.8,480.2 832.4,479.5 833.1,479.0 833.9,478.5 834.7,478.2 835.6,478.0 836.5,477.9 837.5,477.9 838.4,478.0 839.3,478.3 840.2,478.6 841.1,479.1 841.8,479.7 842.5,480.4 843.2,481.1 843.7,481.9 844.1,482.8 844.4,483.6 844.6,484.6 844.6,485.5 844.5,486.4 844.3,487.3 844.0,488.1 843.6,488.9 803.8,544.8 803.2,545.6 802.5,546.4 801.6,547.0 800.7,547.5 799.7,547.9 798.7,548.1 797.6,548.2 796.5,548.2 795.4,548.0 794.3,547.7 793.3,547.2 792.3,546.6 791.3,546.0 790.5,545.2 789.8,544.3 789.1,543.4 788.7,542.3 788.3,541.3 788.1,540.2" fill="#4c4c4c" fill-opacity="0.92"/><polygon points="904.9,550.7 905.0,549.6 905.3,548.6 929.0,490.5 929.3,489.6 929.8,488.8 930.4,488.1 931.1,487.5 931.9,486.9 932.7,486.4 933.6,486.1 934.6,485.9 935.5,485.8 936.5,485.8 937.5,485.9 938.5,486.2 939.4,486.6 940.3,487.0 941.1,487.6 941.8,488.3 942.4,489.1 943.0,489.9 943.4,490.8 943.6,491.7 943.8,492.6 943.8,493.6 943.7,494.5 943.5,495.4 922.7,554.7 922.3,555.7 921.7,556.6 921.0,557.5 920.2,558.2 919.3,558.9 918.2,559.4 917.2,559.7 916.0,560.0 914.9,560.1 913.7,560.0 912.5,559.8 911.3,559.5 910.2,559.0 909.2,558.5 908.2,557.7 907.4,556.9 906.6,556.0 906.0,555.1 905.5,554.0 905.2,552.9 905.0,551.8" fill="#4c4c4c" fill-opacity="0.92"/></svg>
</div>
</body></html>
